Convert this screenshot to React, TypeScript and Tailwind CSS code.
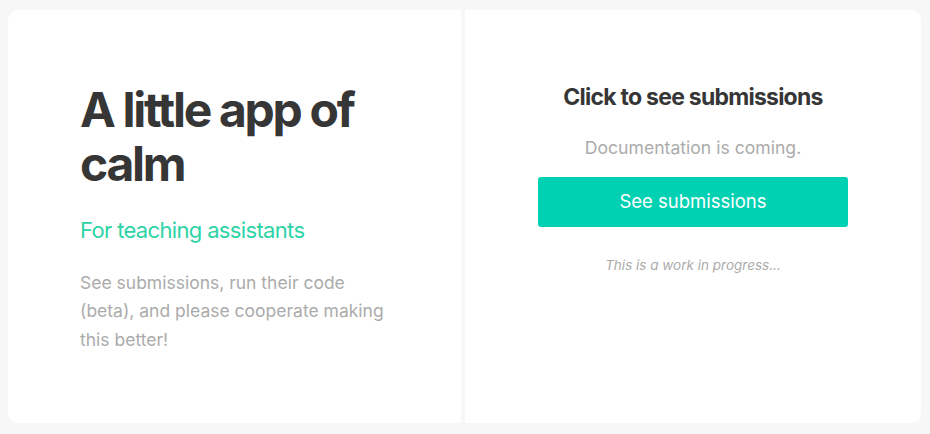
import React from 'react';

const font = { fontFamily: 'Inter, "Noto Sans", sans-serif' };

const IntroCard: React.FC = () => {
  return (
    <div className="flex w-[453px] flex-col justify-center rounded-l-[10px] bg-white pl-[72px]">
      <div className="w-[312px] pt-[4px]">
        <h1 className="text-[48px] font-bold leading-[54px] tracking-[-0.048em] text-[#363636]">
          A little app of calm
        </h1>
        <h2 className="mt-[24px] text-[22px] leading-[30px] tracking-[-0.03em] text-[#2ed3a6]">
          For teaching assistants
        </h2>
        <p className="mt-[24px] text-[17.5px] leading-[28.5px] text-[#ababab]">
          See submissions, run their code (beta), and please cooperate making this better!
        </p>
      </div>
    </div>
  );
};

const ActionCard: React.FC = () => {
  return (
    <div className="flex flex-1 flex-col items-center rounded-r-[10px] bg-white pt-[72px]">
      <h3 className="text-[23px] font-bold leading-[30px] tracking-[-0.033em] text-[#363636]">
        Click to see submissions
      </h3>
      <p className="mt-[23px] text-[17.6px] leading-[26px] text-[#ababab]">Documentation is coming.</p>
      <button className="mt-[16px] flex h-[50px] w-[310px] items-center justify-center rounded-[3px] bg-[#00d1b2] text-[18.5px] text-white">
        See submissions
      </button>
      <p className="mt-[28px] text-[13.5px] italic leading-[20px] text-[#ababab]">This is a work in progress...</p>
    </div>
  );
};

export default function App() {
  return (
    <div className="h-[434px] w-[930px] bg-[#f7f7f7] pb-[11px] pl-[8px] pr-[9px] pt-[10px]" style={font}>
      <div className="flex h-full gap-[4px]">
        <IntroCard />
        <ActionCard />
      </div>
    </div>
  );
}
